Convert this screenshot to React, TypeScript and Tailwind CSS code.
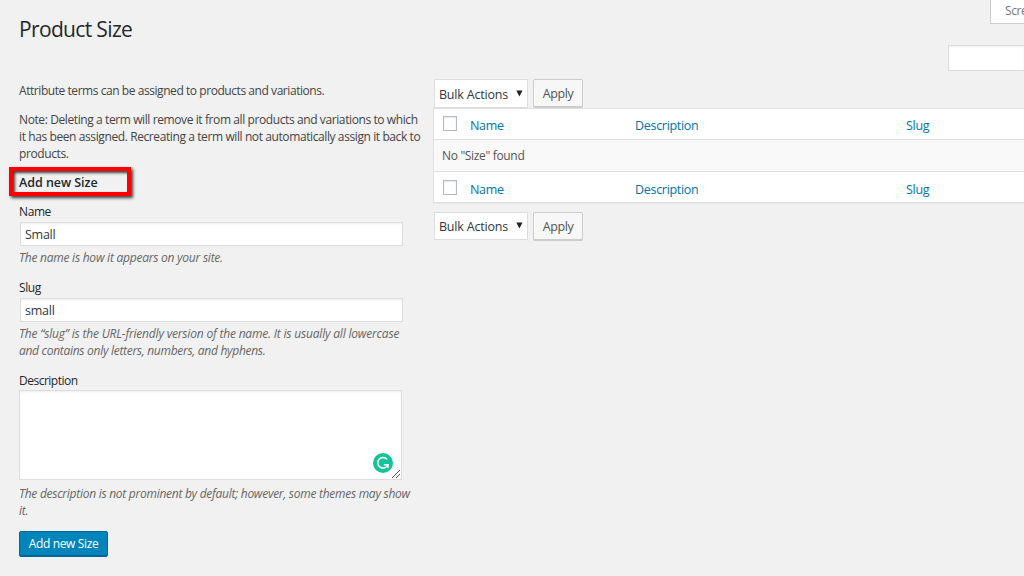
import React from 'react';
import clsx from 'clsx';

const BulkActions: React.FC<{ className?: string }> = ({ className }) => (
  <div className="flex h-[29px] items-start gap-[5px] pl-px">
    <button
      className={clsx(
        'flex w-[94px] items-center justify-between border border-[#ddd] bg-white pr-[4px] pl-[4px] text-[12.5px] text-[#32373c]',
        className
      )}
    >
      <span className="pt-[2px] tracking-[-0.2px] whitespace-nowrap">Bulk Actions</span>
      <svg className="mb-[1px]" width="7" height="7" viewBox="0 0 7 7">
        <path d="M0.3 0.5h6.2L3.4 6.5z" fill="#222" />
      </svg>
    </button>
    <button className="h-[28px] w-[50px] rounded-[2px] border border-[#ccc] bg-[#f7f7f7] pt-[2px] text-[12.5px] tracking-[-0.4px] text-[#555] shadow-[0_1px_0_#ccc]">
      Apply
    </button>
  </div>
);

const HeadingRow: React.FC<{ className?: string }> = ({ className }) => (
  <div
    className={clsx(
      'flex h-[30px] items-center bg-white text-[12.5px] tracking-[-0.3px] text-[#0073aa]',
      className
    )}
  >
    <span className="mr-[13px] mb-[1px] ml-[9px] h-[15px] w-[14px] border border-[#b4b9be] bg-white shadow-[inset_0_1px_2px_rgba(0,0,0,0.1)]" />
    <span className="w-[165px] pt-[4px]">Name</span>
    <span className="w-[271px] pt-[4px]">Description</span>
    <span className="pt-[4px]">Slug</span>
  </div>
);

const Help: React.FC<{ children: React.ReactNode }> = ({ children }) => (
  <p className="text-[12px] leading-[17px] whitespace-nowrap text-[#666] italic">{children}</p>
);

const inputClass =
  'ml-px block h-[24px] w-[383px] border border-[#ddd] bg-white px-[4px] text-[12.5px] tracking-[-0.25px] text-[#32373c] shadow-[inset_0_1px_2px_rgba(0,0,0,0.07)] outline-none';

const App: React.FC = () => {
  return (
    <div className="h-[576px] w-[1024px] overflow-hidden bg-[#f1f1f1] font-['Open_Sans','Noto_Sans',sans-serif] text-[#444]">
      <header className="flex h-[79px] justify-between">
        <h1 className="pt-[14px] pl-[19px] text-[21px] leading-[30px] tracking-[-0.65px] text-[#23282d]">Product Size</h1>
        <div className="flex flex-col items-end gap-[21px]">
          <div className="h-[24px] w-[34px] border-b border-l border-[#ccc] bg-white pl-[14px] text-[12px] leading-[22px] tracking-[-0.4px] text-[#72777c]">
            Scre
          </div>
          <div className="h-[26px] w-[76px] border border-r-0 border-[#ddd] bg-white shadow-[inset_0_1px_2px_rgba(0,0,0,0.07)]" />
        </div>
      </header>

      <main className="flex">
        <section className="w-[433px] shrink-0 pt-[3px] pl-[19px]">
          <div className="text-[12px] leading-[17px] tracking-[-0.4px] whitespace-nowrap">
            <p className="tracking-[-0.44px]">Attribute terms can be assigned to products and variations.</p>
            <p className="mt-[12px]">
              Note: Deleting a term will remove it from all products and variations to which
              <br />
              it has been assigned. Recreating a term will not automatically assign it back to
              <br />
              products.
            </p>
          </div>

          <div className="mt-[5px] -ml-[10px] h-[29px] w-[122px] border-4 border-[#fe0000] pl-[6px] shadow-[2px_2px_3px_rgba(0,0,0,0.75),inset_2px_2px_3px_rgba(0,0,0,0.75)]">
            <h2 className="text-[12.5px] leading-[23px] font-semibold tracking-[-0.05px] whitespace-nowrap text-[#23282d]">
              Add new Size
            </h2>
          </div>

          <form className="text-[12px] tracking-[-0.4px] text-[#23282d]">
            <label className="mt-[7px] block h-[19px] leading-[17px]">Name</label>
            <input className={inputClass} defaultValue="Small" />
            <div className="mt-[3px] tracking-[-0.24px]">
              <Help>The name is how it appears on your site.</Help>
            </div>

            <label className="mt-[13px] block h-[19px] leading-[17px]">Slug</label>
            <input className={inputClass} defaultValue="small" />
            <div className="mt-[3px] tracking-[-0.19px]">
              <Help>
                The “slug” is the URL-friendly version of the name. It is usually all lowercase
                <br />
                <span className="tracking-[-0.29px]">and contains only letters, numbers, and hyphens.</span>
              </Help>
            </div>

            <label className="mt-[13px] block h-[18px] leading-[17px] tracking-[-0.5px]">Description</label>
            <div className="flex h-[90px] w-[383px] items-end justify-end border border-[#ddd] bg-white shadow-[inset_0_1px_2px_rgba(0,0,0,0.07)]">
              <svg className="mb-[6px]" width="20" height="20" viewBox="0 0 20 20" fill="none">
                <circle cx="10" cy="10" r="10" fill="#15c39a" />
                <path d="M14.2 6.4A5.3 5.3 0 1 0 15 11.7H10.8" stroke="#fff" strokeWidth="1.5" />
                <path d="M15 11v4" stroke="#fff" strokeWidth="1.4" />
              </svg>
              <svg className="mr-px mb-px -ml-px" width="8" height="8" viewBox="0 0 8 8" stroke="#555" strokeWidth="1">
                <path d="M0 8L8 0M4 8L8 4" />
              </svg>
            </div>
            <div className="mt-[5px] tracking-[-0.27px]">
              <Help>
                The description is not prominent by default; however, some themes may show
                <br />
                it.
              </Help>
            </div>

            <button
              type="button"
              className="mt-[12px] block h-[26px] w-[89px] rounded-[2px] border border-[#006799] bg-[#0085ba] text-[12px] tracking-[-0.35px] whitespace-nowrap text-white shadow-[inset_0_-1px_0_#006799]"
            >
              Add new Size
            </button>
          </form>
        </section>

        <section className="flex-1">
          <BulkActions className="h-[29px] pt-px" />
          <div className="mb-[9px] border border-r-0 border-[#e1e1e1] shadow-[0_1px_1px_rgba(0,0,0,0.04)]">
            <HeadingRow />
            <div className="h-[33px] border-y border-[#e1e1e1] bg-[#f9f9f9] pl-[8px] text-[12px] leading-[31px] tracking-[-0.33px] text-[#555]">
              No "Size" found
            </div>
            <HeadingRow className="pt-[2px]" />
          </div>
          <BulkActions className="h-[28px]" />
        </section>
      </main>
    </div>
  );
};

export default App;
